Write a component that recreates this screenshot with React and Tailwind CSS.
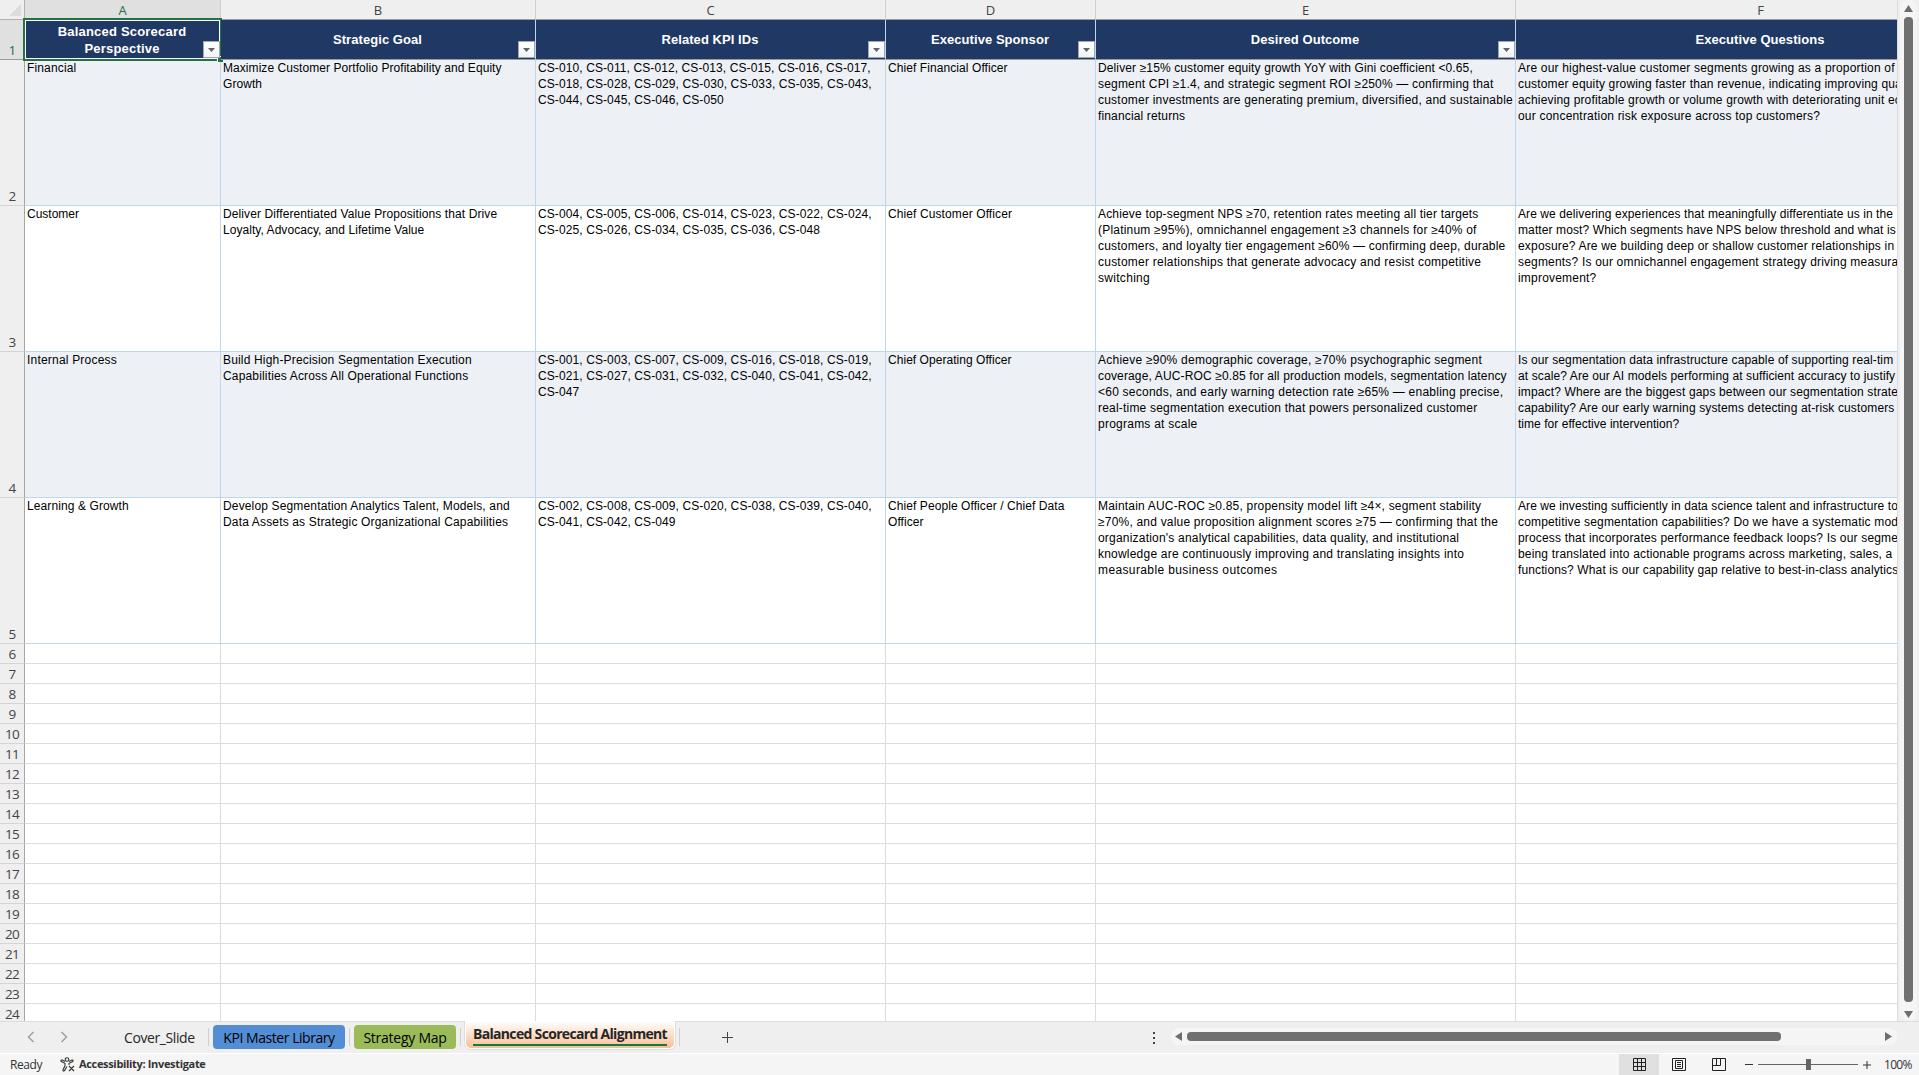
import clsx from 'clsx';

const columns = [
    { id: 'A', title: 'Balanced Scorecard Perspective', filter: true },
    { id: 'B', title: 'Strategic Goal', filter: true },
    { id: 'C', title: 'Related KPI IDs', filter: true },
    { id: 'D', title: 'Executive Sponsor', filter: true },
    { id: 'E', title: 'Desired Outcome', filter: true },
    { id: 'F', title: 'Executive Questions', filter: false },
];

const rows = [
    [
        ['Financial'],
        ['Maximize Customer Portfolio Profitability and Equity', 'Growth'],
        ['CS-010, CS-011, CS-012, CS-013, CS-015, CS-016, CS-017,', 'CS-018, CS-028, CS-029, CS-030, CS-033, CS-035, CS-043,', 'CS-044, CS-045, CS-046, CS-050'],
        ['Chief Financial Officer'],
        ['Deliver ≥15% customer equity growth YoY with Gini coefficient <0.65,', 'segment CPI ≥1.4, and strategic segment ROI ≥250% — confirming that', 'customer investments are generating premium, diversified, and sustainable', 'financial returns'],
        ['Are our highest-value customer segments growing as a proportion of', 'customer equity growing faster than revenue, indicating improving qua', 'achieving profitable growth or volume growth with deteriorating unit ec', 'our concentration risk exposure across top customers?'],
    ],
    [
        ['Customer'],
        ['Deliver Differentiated Value Propositions that Drive', 'Loyalty, Advocacy, and Lifetime Value'],
        ['CS-004, CS-005, CS-006, CS-014, CS-023, CS-022, CS-024,', 'CS-025, CS-026, CS-034, CS-035, CS-036, CS-048'],
        ['Chief Customer Officer'],
        ['Achieve top-segment NPS ≥70, retention rates meeting all tier targets', '(Platinum ≥95%), omnichannel engagement ≥3 channels for ≥40% of', 'customers, and loyalty tier engagement ≥60% — confirming deep, durable', 'customer relationships that generate advocacy and resist competitive', 'switching'],
        ['Are we delivering experiences that meaningfully differentiate us in the', 'matter most? Which segments have NPS below threshold and what is', 'exposure? Are we building deep or shallow customer relationships in', 'segments? Is our omnichannel engagement strategy driving measura', 'improvement?'],
    ],
    [
        ['Internal Process'],
        ['Build High-Precision Segmentation Execution', 'Capabilities Across All Operational Functions'],
        ['CS-001, CS-003, CS-007, CS-009, CS-016, CS-018, CS-019,', 'CS-021, CS-027, CS-031, CS-032, CS-040, CS-041, CS-042,', 'CS-047'],
        ['Chief Operating Officer'],
        ['Achieve ≥90% demographic coverage, ≥70% psychographic segment', 'coverage, AUC-ROC ≥0.85 for all production models, segmentation latency', '<60 seconds, and early warning detection rate ≥65% — enabling precise,', 'real-time segmentation execution that powers personalized customer', 'programs at scale'],
        ['Is our segmentation data infrastructure capable of supporting real-tim', 'at scale? Are our AI models performing at sufficient accuracy to justify', 'impact? Where are the biggest gaps between our segmentation strate', 'capability? Are our early warning systems detecting at-risk customers', 'time for effective intervention?'],
    ],
    [
        ['Learning & Growth'],
        ['Develop Segmentation Analytics Talent, Models, and', 'Data Assets as Strategic Organizational Capabilities'],
        ['CS-002, CS-008, CS-009, CS-020, CS-038, CS-039, CS-040,', 'CS-041, CS-042, CS-049'],
        ['Chief People Officer / Chief Data', 'Officer'],
        ['Maintain AUC-ROC ≥0.85, propensity model lift ≥4×, segment stability', '≥70%, and value proposition alignment scores ≥75 — confirming that the', "organization's analytical capabilities, data quality, and institutional", 'knowledge are continuously improving and translating insights into', 'measurable business outcomes'],
        ['Are we investing sufficiently in data science talent and infrastructure to', 'competitive segmentation capabilities? Do we have a systematic mod', 'process that incorporates performance feedback loops? Is our segme', 'being translated into actionable programs across marketing, sales, a', 'functions? What is our capability gap relative to best-in-class analytics'],
    ],
];

// letter spacing of every line, in hundredths of a pixel
const spacing = [
    [[15], [6, 6], [10, 10, 10], [8], [12, 18, 22, 15], [19, 16, 16, 20]],
    [[0], [10, 5], [10, 10], [10], [17, 20, 19, 23, 30], [9, 11, 18, 19, 20]],
    [[20], [17, 16], [10, 10, 10], [4], [24, 14, 23, 20, 24], [12, 11, 14, 13, 4]],
    [[10], [15, 16], [10, 10], [8, 8], [19, 20, 20, 21, 38], [9, 17, 17, 17, 12]],
];

const gridCols = 'grid grid-cols-[25px_196px_315px_350px_210px_420px_382px]';
const uiFont = "font-['Open_Sans','Noto_Sans',sans-serif]";

const FilterButton = () => (
    <div className="absolute right-0 bottom-px w-[17px] h-[17px] bg-gradient-to-b from-white to-[#f1f3f6] border border-[#a0a6ae] flex items-center justify-center">
        <svg width="7" height="4" viewBox="0 0 7 4"><path d="M0 0h7L3.5 4z" fill="#5f6368" /></svg>
    </div>
);

const RowNumber = ({ children, active }) => (
    <div
        className={clsx(
            'flex items-end justify-center border-r border-b text-[13.5px] leading-[17px] tracking-[-0.8px]',
            uiFont,
            active ? 'bg-[#e0e0e0] text-[#217346] border-[#9b9b9b]' : 'bg-[#efefef] text-[#444] border-r-[#a6a6a6] border-b-[#d4d4d4]'
        )}
    >
        {children}
    </div>
);

const ColumnHeaders = () => (
    <div className={clsx(gridCols, 'h-5')}>
        <div className="bg-[#efefef] border-r border-b border-[#b0b0b0] flex items-end justify-end pr-[3px] pb-[3px]">
            <svg width="12" height="12" viewBox="0 0 12 12"><path d="M12 0v12H0z" fill="#dcdcdc" /></svg>
        </div>
        {columns.map((col) => (
            <div
                key={col.id}
                className={clsx(
                    'flex items-center justify-center pt-[2px] border-b border-b-[#9b9b9b] text-[13px] leading-none',
                    uiFont,
                    col.id !== 'F' && 'border-r border-r-[#cfcfcf]',
                    col.id === 'A' ? 'bg-[#e0e0e0] text-[#217346]' : 'bg-[#efefef] text-[#444]',
                    col.id === 'F' && 'pl-[107px]'
                )}
            >
                {col.id}
            </div>
        ))}
    </div>
);

const TitleRow = () => (
    <div className={clsx(gridCols, 'h-10')}>
        <RowNumber active>1</RowNumber>
        {columns.map((col) => (
            <div
                key={col.id}
                className={clsx(
                    'relative flex items-center justify-center bg-[#203864] border-b border-b-[#9b9b9b] text-white font-bold text-[13px] leading-[17px] text-center whitespace-nowrap',
                    col.id !== 'F' && 'border-r border-r-[#bdd7ee]',
                    col.id === 'A' ? 'tracking-[0.2px] pt-px' : 'tracking-[0.06px]',
                    col.id === 'F' ? 'pl-[106px]' : 'pr-px'
                )}
            >
                <span className={clsx(col.id === 'A' && 'w-[150px] whitespace-normal')}>{col.title}</span>
                {col.id === 'A' && (
                    <div className="absolute -left-[2px] -top-[2px] w-[199px] h-[43px] border-2 border-[#217346]">
                        <div className="w-full h-full border border-white" />
                        <div className="absolute -right-[3px] -bottom-[3px] w-[6px] h-[6px] bg-[#217346] border-t border-l border-white" />
                    </div>
                )}
                {col.filter && <FilterButton />}
            </div>
        ))}
    </div>
);

const DataRow = ({ number, cells, spacing, shaded }) => (
    <div className={clsx(gridCols, 'h-[146px]')}>
        <RowNumber>{number}</RowNumber>
        {cells.map((lines, i) => (
            <div
                key={columns[i].id}
                className={clsx(
                    'border-b border-[#bdd7ee] pl-[2px] text-[12px] leading-4 text-black whitespace-nowrap overflow-hidden',
                    shaded ? 'bg-[#edf1f6]' : 'bg-white',
                    i < 5 && 'border-r'
                )}
            >
                {lines.map((line, n) => (
                    <div key={line} style={{ letterSpacing: `${spacing[i][n] / 100}px` }}>{line}</div>
                ))}
            </div>
        ))}
    </div>
);

const EmptyRow = ({ number }) => (
    <div className={clsx(gridCols, 'h-5 shrink-0')}>
        <RowNumber>{number}</RowNumber>
        {columns.map((col) => (
            <div key={col.id} className={clsx('bg-white border-b border-[#dcdcdc]', col.id !== 'F' && 'border-r')} />
        ))}
    </div>
);

const VerticalScroll = () => (
    <div className="w-[22px] bg-[#efefef] border-l border-[#dcdcdc] flex justify-end pr-[2px]">
        <div className="w-[17px] h-full rounded-lg bg-[#f5f5f5] flex flex-col items-center pt-[5px] pb-[3px]">
            <svg width="9" height="7" viewBox="0 0 9 7"><path d="M4.5 0 9 7H0z" fill="#6e6e6e" /></svg>
            <div className="w-[9px] flex-1 mt-[5px] mb-[9px] rounded-[4px] bg-[#707070]" />
            <svg width="9" height="7" viewBox="0 0 9 7"><path d="M0 0h9L4.5 7z" fill="#6e6e6e" /></svg>
        </div>
    </div>
);

const TabBar = () => (
    <div className={clsx('flex h-[32px] bg-[#efefef] border-t border-[#dcdcdc] text-[14px] text-[#262626]', uiFont)}>
        <div className="flex items-center gap-[25px] w-[115px] pl-[27px] pb-px">
            <svg width="8" height="12" viewBox="0 0 8 12" fill="none" stroke="#a0a0a0" strokeWidth="1.5"><path d="M6.5 1 1.500 6l5 5" /></svg>
            <svg width="8" height="12" viewBox="0 0 8 12" fill="none" stroke="#a0a0a0" strokeWidth="1.5"><path d="m1.500 1 5 5-5 5" /></svg>
        </div>
        <div className="w-[94px] mt-[6px] mb-[7px] pl-[9px] border-r border-[#cfcfcf] flex items-center whitespace-nowrap tracking-[-0.4px]">Cover_Slide</div>
        <div className="ml-[4px] mt-[3px] w-[132px] h-6 rounded bg-[#538dd5] flex items-center justify-center whitespace-nowrap text-black tracking-[-0.45px]">KPI Master Library</div>
        <div className="w-[5px] mt-[6px] mb-[7px] border-r border-[#cfcfcf]" />
        <div className="ml-[4px] mt-[3px] w-[102px] h-6 rounded bg-[#9bbb59] flex items-center justify-center whitespace-nowrap text-black tracking-[-0.25px]">Strategy Map</div>
        <div className="w-[5px] mt-[6px] mb-[7px] border-r border-[#cfcfcf]" />
        <div className="ml-[4px] -mt-px w-[210px] h-[28px] rounded-b-md border border-t-0 border-white bg-gradient-to-b from-white to-[#f6bf95] flex justify-center shadow-[0_0_0_1px_#dedede] [clip-path:inset(0_-1px_-1px_-1px)]">
            <span className="h-[25px] border-b-2 border-[#107c41] font-bold leading-[25px] text-[14px] tracking-[-0.68px] whitespace-nowrap">Balanced Scorecard Alignment</span>
        </div>
        <div className="w-[5px] mt-[6px] mb-[7px] border-r border-[#cfcfcf]" />
        <div className="flex items-center pl-[42px] pb-px">
            <svg width="11" height="11" viewBox="0 0 11 11" stroke="#444" fill="none"><path d="M5.5 0v11M0 5.5h11" /></svg>
        </div>
        <div className="ml-auto flex items-center">
            <svg width="3" height="12" viewBox="0 0 3 12" fill="#444"><path d="M0 0h2v2H0zM0 5h2v2H0zM0 10h2v2H0z" /></svg>
        </div>
        <div className="ml-[15px] mr-[22px] mt-[6px] w-[726px] h-[17px] rounded-lg bg-[#f5f5f5] flex items-center pl-[4px] pr-[5px] gap-[5px]">
            <svg width="7" height="9" viewBox="0 0 7 9"><path d="M7 0v9L0 4.5z" fill="#6e6e6e" /></svg>
            <div className="h-[9px] w-[594px] rounded-[4px] bg-[#707070]" />
            <svg className="ml-auto" width="7" height="9" viewBox="0 0 7 9"><path d="M0 0v9l7-4.500z" fill="#6e6e6e" /></svg>
        </div>
    </div>
);

const StatusBar = () => (
    <div className={clsx('flex items-center h-[22px] bg-[#f5f5f5] border-t border-white text-[12px] text-[#333]', uiFont)}>
        <span className="pl-[10px] w-[60px] tracking-[-0.4px]">Ready</span>
        <svg className="-mt-px" width="16" height="15" viewBox="0 0 16 15" fill="none" stroke="#333" strokeWidth="1.1">
            <circle cx="7" cy="2.5" r="1.8" />
            <path d="M5 4.500 2.200 3C1 2.600.5 4.200 1.600 4.700L5 6.300v2.500L3 12.800c-.4 1.200 1 1.700 1.500.8L7 9.500M9 4.500 11.800 3c1.200-.4 1.700 1.200.6 1.700L9 6.300V8M9 9l5 5M14 9l-5 5" />
        </svg>
        <span className="ml-[3px] -mt-px font-bold text-[11px] tracking-[-0.33px]">Accessibility: Investigate</span>
        <div className="ml-auto flex items-center h-full">
            <div className="w-10 h-full bg-[#e0e0e0] flex items-center justify-center">
                <svg width="13" height="13" viewBox="0 0 13 13" fill="none" stroke="#222"><path d="M.5.500h12v12H.5zM4.500.500v12M8.500.500v12M.5 4.500h12M.5 8.500h12" /></svg>
            </div>
            <div className="w-10 flex justify-center">
                <svg width="14" height="13" viewBox="0 0 14 13" fill="none" stroke="#222"><path d="M.5.500h13v12H.5zM3.500 2.500h7v8h-7zM5 4.500h4M5 6.500h4M5 8.500h4" /></svg>
            </div>
            <div className="w-10 flex justify-center">
                <svg width="14" height="13" viewBox="0 0 14 13" fill="none" stroke="#222"><path d="M.5.500h13v12H.5zM.5 7.500h8v-7M4.500.500v7" /></svg>
            </div>
            <div className="flex items-center pl-[6px]">
                <div className="w-2 h-px bg-[#333]" />
                <div className="ml-[5px] w-[100px] h-px bg-[#666] flex items-center justify-center">
                    <div className="w-[5px] h-[11px] shrink-0 bg-[#666]" />
                </div>
                <svg className="ml-[5px]" width="8" height="8" viewBox="0 0 8 8" stroke="#333"><path d="M4 0v8M0 4h8" /></svg>
            </div>
            <span className="ml-[13px] w-[35px] tracking-[-0.7px]">100%</span>
        </div>
    </div>
);

const App = () => (
    <div className="w-[1919px] h-[1075px] flex flex-col overflow-hidden bg-[#efefef] font-['Liberation_Sans',Arial,sans-serif]">
        <div className="flex h-[1021px]">
            <div className="w-[1897px] flex flex-col overflow-hidden">
                <div className="w-[1898px] flex flex-col">
                    <ColumnHeaders />
                    <TitleRow />
                    {rows.map((cells, i) => (
                        <DataRow key={cells[0][0]} number={i + 2} cells={cells} spacing={spacing[i]} shaded={i % 2 === 0} />
                    ))}
                    {Array.from({ length: 19 }, (_, i) => <EmptyRow key={i} number={i + 6} />)}
                </div>
            </div>
            <VerticalScroll />
        </div>
        <TabBar />
        <StatusBar />
    </div>
);

export default App;
